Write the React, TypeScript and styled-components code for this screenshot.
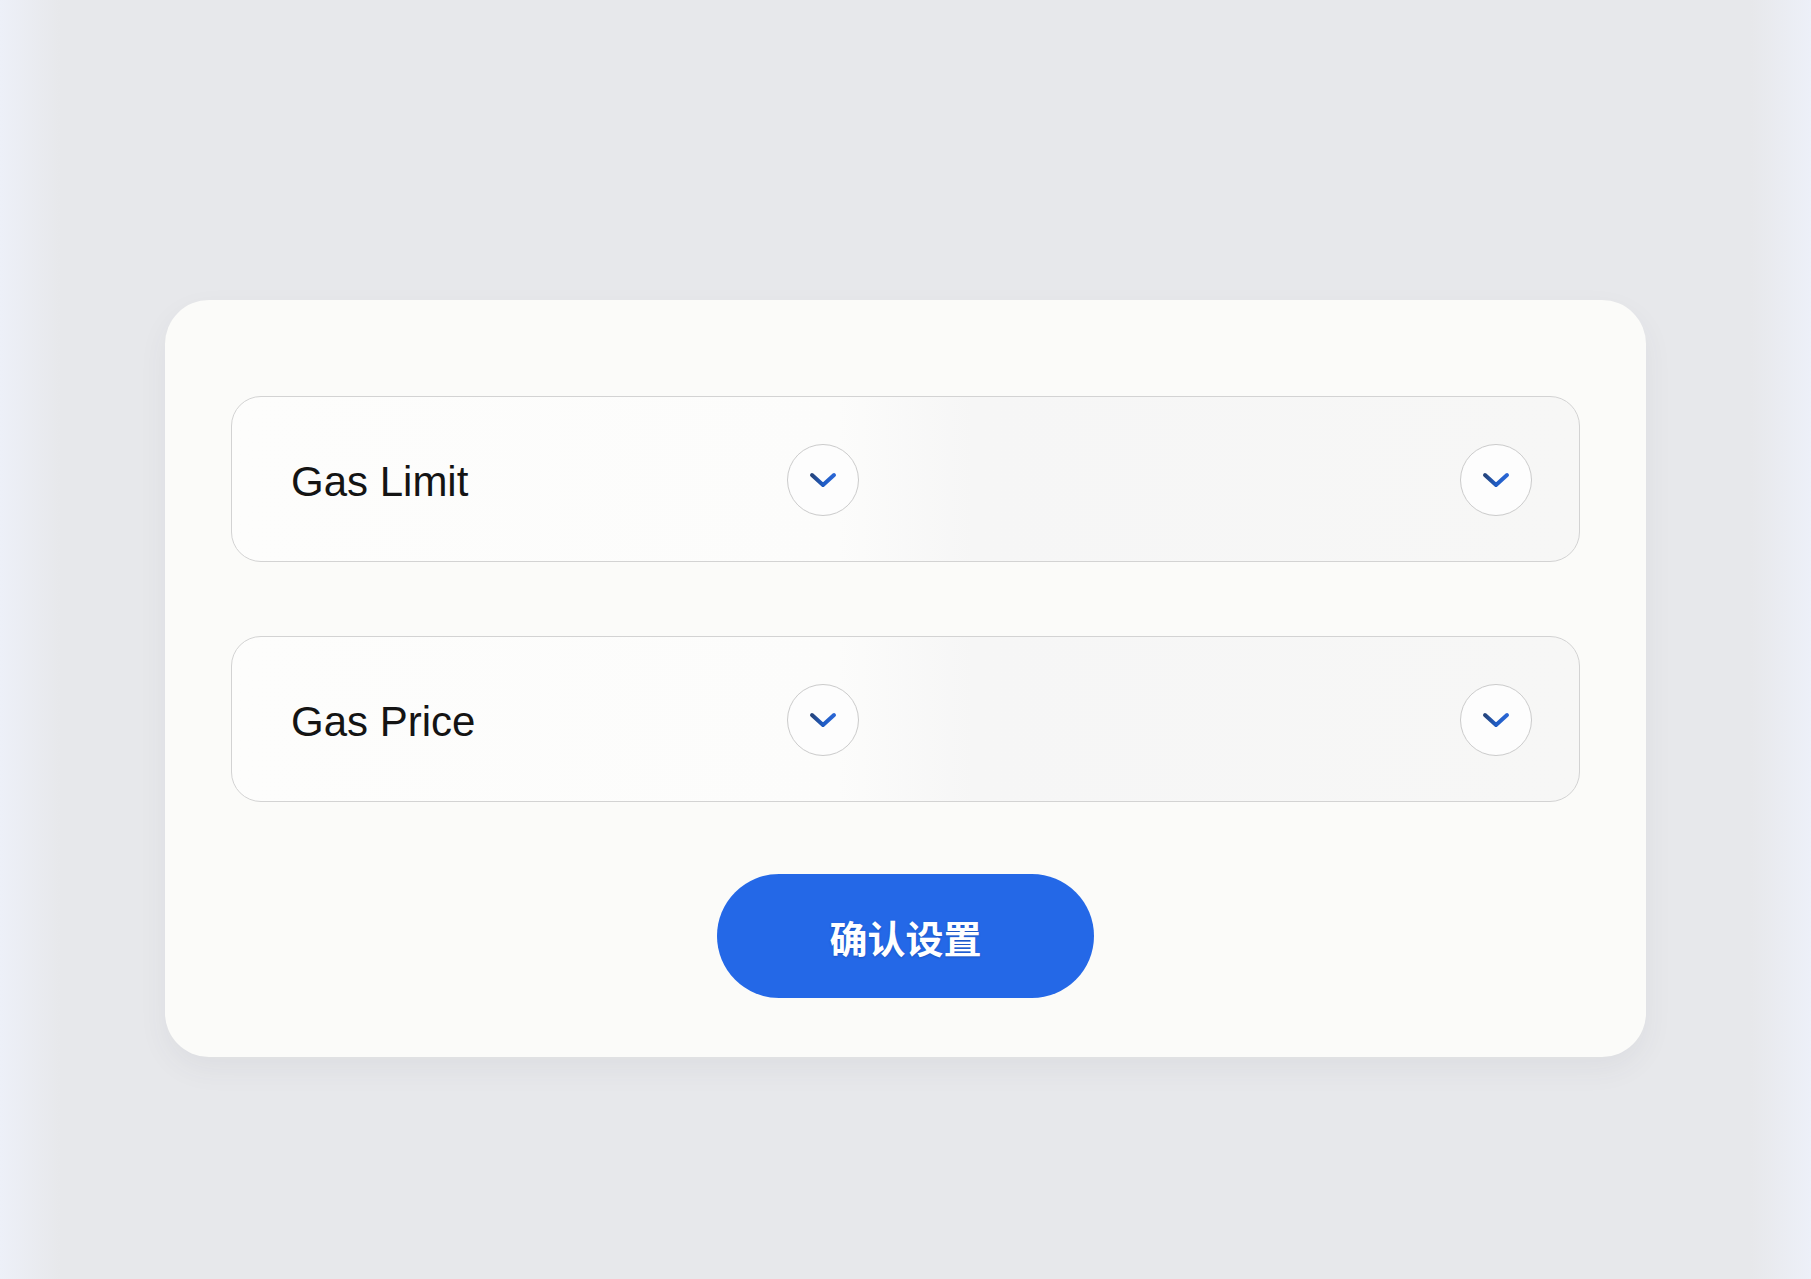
import * as React from 'react';
import styled, { createGlobalStyle } from 'styled-components';

const GlobalStyle = createGlobalStyle`
  html, body {
    margin: 0;
    padding: 0;
  }
  body {
    font-family: "Liberation Sans", Arial, sans-serif;
    background: #e7e8eb;
  }
`;

const Page = styled.div`
  width: 100%;
  min-height: 1279px;
  box-sizing: border-box;
  padding-top: 300px;
  display: flex;
  justify-content: center;
  align-items: flex-start;
  background:
    linear-gradient(to right, #edf0f8 0, #e7e8eb 60px, #e7e8eb calc(100% - 60px), #edf0f8 100%),
    #e7e8eb;
`;

const Card = styled.div`
  width: 1481px;
  box-sizing: border-box;
  padding: 96px 66px 59px;
  background: #fbfbf9;
  border-radius: 44px;
  box-shadow: 0 12px 30px rgba(60, 70, 90, 0.06);
  display: flex;
  flex-direction: column;
  align-items: center;
`;

const Field = styled.div`
  width: 100%;
  height: 166px;
  box-sizing: border-box;
  border: 1.5px solid #d3d3d3;
  border-radius: 30px;
  overflow: hidden;
  display: grid;
  grid-template-columns: 1fr 1fr;
  background: linear-gradient(to right, #fdfdfc 0%, #fcfcfb 45%, #f6f6f6 55%, #f7f7f6 100%);
  & + & {
    margin-top: 74px;
  }
`;

const Half = styled.div`
  display: flex;
  align-items: center;
  justify-content: space-between;
  padding: 6px 47px 0 59px;
  box-sizing: border-box;
`;

const Label = styled.span`
  font-family: "Liberation Sans", Arial, sans-serif;
  font-size: 42px;
  color: #141414;
  letter-spacing: 0;
`;

const RoundButton = styled.button`
  width: 72px;
  height: 72px;
  margin-top: -4px;
  border-radius: 50%;
  border: 1.5px solid #cbcbcb;
  background: #fdfdfd;
  display: flex;
  align-items: center;
  justify-content: center;
  padding: 0;
  margin-left: auto;
  cursor: pointer;
`;

const Confirm = styled.button`
  margin-top: 72px;
  width: 377px;
  height: 124px;
  border: none;
  border-radius: 62px;
  background: #2468e7;
  color: #ffffff;
  font-family: "Noto Sans CJK SC", "Liberation Sans", sans-serif;
  font-weight: 700;
  font-size: 38px;
  letter-spacing: 0;
  text-shadow: 0 1px 2px rgba(10, 40, 110, 0.35);
  cursor: pointer;
`;

const Chevron: React.FC = () => (
  <svg width="30" height="20" viewBox="0 0 30 20" fill="none">
    <defs>
      <linearGradient id="chev" x1="0" y1="0" x2="1" y2="0">
        <stop offset="0%" stopColor="#26457d" />
        <stop offset="50%" stopColor="#1f5cc4" />
        <stop offset="100%" stopColor="#2a66d4" />
      </linearGradient>
    </defs>
    <path
      d="M4 5 L15 15 L26 5"
      stroke="url(#chev)"
      strokeWidth="4"
      strokeLinecap="round"
      strokeLinejoin="round"
    />
  </svg>
);

const Toggle: React.FC = () => (
  <RoundButton type="button">
    <Chevron />
  </RoundButton>
);

const SettingRow: React.FC<{ label: string }> = ({ label }) => (
  <Field>
    <Half>
      <Label>{label}</Label>
      <Toggle />
    </Half>
    <Half>
      <Toggle />
    </Half>
  </Field>
);

const App: React.FC = () => (
  <>
    <GlobalStyle />
    <Page>
      <Card>
        <SettingRow label="Gas Limit" />
        <SettingRow label="Gas Price" />
        <Confirm type="button">确认设置</Confirm>
      </Card>
    </Page>
  </>
);

export default App;
